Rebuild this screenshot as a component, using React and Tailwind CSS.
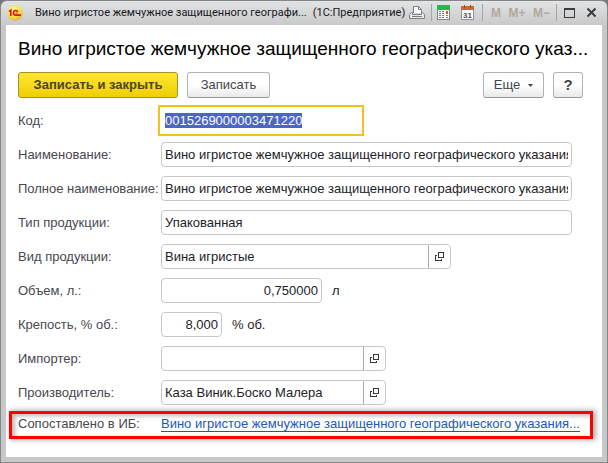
import { useEffect, useRef } from 'react';

const PRODUCT = 'Вино игристое жемчужное защищенного географического указания';

const inputBase =
  'h-[25px] rounded-[4px] border border-[#c6c7cc] bg-white px-[3px] text-[13px] leading-4 text-[#222226] outline-none';

function Row({ label, id, children }) {
  return (
    <div className="flex items-center">
      <label htmlFor={id} className="w-[143px] shrink-0 whitespace-nowrap">
        {label}
      </label>
      {children}
    </div>
  );
}

function PickerInput({ id, value, label, className }) {
  return (
    <div className={`flex h-[25px] rounded-[4px] border border-[#c6c7cc] bg-white ${className}`}>
      <input
        id={id}
        defaultValue={value}
        className="min-w-0 flex-1 bg-transparent px-[3px] text-[13px] leading-4 text-[#222226] outline-none"
      />
      <button type="button" aria-label={label} className="flex w-[22px] items-center justify-center border-l border-[#a9a9ad]">
        <svg width="10" height="9" viewBox="0 0 10 9" fill="none" stroke="#36363c" className="shrink-0" shapeRendering="crispEdges">
          <path d="M3.5 0.5h5v5h-5z" />
          <path d="M2 3.5h-1.5v5h6v-2" />
        </svg>
      </button>
    </div>
  );
}

function Logo() {
  return (
    <svg width="16" height="16" viewBox="0 0 16 16" className="shrink-0">
      <defs>
        <radialGradient id="logo" cx="0.4" cy="0.3" r="0.75">
          <stop offset="0" stopColor="#fff59a" />
          <stop offset="0.6" stopColor="#fbe04a" />
          <stop offset="1" stopColor="#dcae2c" />
        </radialGradient>
      </defs>
      <circle cx="8" cy="8" r="7.8" fill="url(#logo)" />
      <g fill="none" stroke="#e3111b" strokeWidth="1.6">
        <path d="M2 6.6L3.8 5.2V11" />
        <path d="M10.8 6.9A2.3 2.3 0 1 0 8.6 10.1H14" />
      </g>
      <path d="M8.4 8.1h2.2" stroke="#e3111b" />
    </svg>
  );
}

function PrinterIcon() {
  return (
    <svg width="16" height="16" viewBox="0 0 16 16" fill="none" stroke="#7a7f88">
      <path d="M4.5 8V1.5h5l3 3V8" fill="#fff" />
      <path d="M9.5 1.5v3h3" />
      <path d="M0.5 9.5l2-2h1v2h9v-2h1l2 2v4h-15z" fill="#e6e8ec" />
      <path d="M3 11.5h10" />
    </svg>
  );
}

function CalculatorIcon() {
  return (
    <svg width="14" height="16" viewBox="0 0 14 16" shapeRendering="crispEdges">
      <path d="M0.5 0.5h12v14h-12z" fill="#f4f6f4" stroke="#7c8a80" />
      <path d="M0 0h13v5H0z" fill="#35b04a" />
      <path d="M2 6h2v1H2zM5 6h2v1H5zM2 8h2v1H2zM5 8h2v1H5zM2 10h2v1H2zM5 10h2v1H5zM2 12h2v1H2zM5 12h2v1H5zM9 10h2v1H9zM9 12h2v1H9z" fill="#77847b" />
      <path d="M9 6h2v3H9z" fill="#d8583a" />
    </svg>
  );
}

function CalendarIcon() {
  return (
    <svg width="14" height="16" viewBox="0 0 14 16">
      <path d="M0.5 2.5h12v12h-12z" fill="#fff" stroke="#8c8f98" />
      <path d="M0 1h13v4H0z" fill="#c9683c" />
      <path d="M3.5 0v3M9.5 0v3" stroke="#8a4a2c" />
      <text x="6.5" y="12.5" textAnchor="middle" fontFamily="Liberation Sans, sans-serif" fontSize="8" fontWeight="700" fill="#4b5060">
        31
      </text>
    </svg>
  );
}

function Separator() {
  return <span className="h-[17px] w-px bg-[#a6a6aa]" />;
}

function TitleBar() {
  return (
    <header className="flex h-[25px] items-center pr-[6px] pl-[2px]">
      <Logo />
      <div className="ml-3 flex min-w-0 flex-1 gap-[6px] overflow-hidden font-[Roboto,sans-serif] text-[11px] whitespace-nowrap text-[#18181c]">
        <span>Вино игристое жемчужное защищенного географи...</span>
        <span>(1С:Предприятие)</span>
      </div>
      <div className="flex shrink-0 items-center">
        <button type="button" aria-label="Печать"><PrinterIcon /></button>
        <span className="mr-[5px] ml-[6px] flex"><Separator /></span>
        <button type="button" aria-label="Калькулятор"><CalculatorIcon /></button>
        <button type="button" aria-label="Календарь" className="ml-[10px]"><CalendarIcon /></button>
        <span className="mr-2 ml-[7px] flex"><Separator /></span>
        <div className="flex w-[59px] justify-between text-[12px] leading-4 font-bold text-[#b3a79c]">
          <button type="button">M</button>
          <button type="button">M+</button>
          <button type="button">M−</button>
        </div>
        <span className="mr-[7px] ml-[6px] flex"><Separator /></span>
        <button type="button" aria-label="Развернуть">
          <svg width="12" height="12" viewBox="0 0 12 12" fill="none" stroke="#3c3c40" shapeRendering="crispEdges">
            <path d="M0.5 1.5h10v9h-10z" />
            <path d="M0 2h11" strokeWidth="2" />
          </svg>
        </button>
        <button type="button" aria-label="Закрыть" className="ml-[10px]">
          <svg width="11" height="11" viewBox="0 0 11 11" fill="none" stroke="#3c3c40" strokeWidth="2">
            <path d="M1.5 1.5l8 8M9.5 1.5l-8 8" />
          </svg>
        </button>
      </div>
    </header>
  );
}

const plainButton =
  'h-[26px] rounded-[3px] border border-[#b4b4b6] border-b-[#98989a] bg-gradient-to-b from-white from-50% to-[#e9e9e9] text-[#444448]';

export default function App() {
  const codeRef = useRef(null);

  useEffect(() => {
    codeRef.current?.focus();
    codeRef.current?.select();
  }, []);

  return (
    <div className="min-h-screen bg-[#77797a] font-['Liberation_Sans',Arial,sans-serif] text-[13px] leading-4 text-[#48484e]">
      <div className="flex min-h-screen flex-col rounded-t-[7px] border border-[#85888a] bg-gradient-to-b from-[#e2e3e4] to-[#c6c8ca] to-[25px] px-[5px] pb-[5px]">
        <div className="-mx-[1px] -mt-px">
          <TitleBar />
        </div>
        <main className="flex-1 bg-white pt-[12px] pr-[9px] pl-[3px]">
          <h1 className="truncate pl-[9px] text-[19px] leading-6 text-black">
            Вино игристое жемчужное защищенного географического указ...
          </h1>

          <form className="pt-[11px]" onSubmit={(e) => e.preventDefault()}>
            <div className="flex items-center gap-[9px] pr-[10px] pl-[9px]">
              <button
                type="submit"
                className="h-[26px] w-[160px] rounded-[3px] border border-[#a8912a] bg-gradient-to-b from-[#fbe72c] to-[#efcf00] text-[13px] font-bold text-[#4f4526]"
              >
                Записать и закрыть
              </button>
              <button type="button" className={`${plainButton} w-[83px]`}>Записать</button>
              <button type="button" className={`${plainButton} ml-auto flex w-[61px] items-center justify-center gap-2`}>
                Еще
                <svg width="5" height="3" viewBox="0 0 5 3" fill="#444448"><path d="M0 0h5L2.5 3z" /></svg>
              </button>
              <button type="button" className={`${plainButton} w-[30px] text-[15px] font-bold`}>?</button>
            </div>

            <div className="flex flex-col gap-[9px] pt-[10px] pr-[21px] pl-[9px]">
              <Row label="Код:" id="code">
                <input
                  id="code"
                  ref={codeRef}
                  defaultValue="0015269000003471220"
                  className="h-[25px] w-[200px] bg-white px-1 text-[13px] leading-4 text-[#222226] outline-2 outline-offset-1 outline-[#f5c21c] selection:bg-[#4c66c6] selection:text-white"
                />
              </Row>
              <Row label="Наименование:" id="name">
                <input id="name" defaultValue={PRODUCT} className={`${inputBase} min-w-0 flex-1`} />
              </Row>
              <Row label="Полное наименование:" id="full-name">
                <input id="full-name" defaultValue={PRODUCT} className={`${inputBase} min-w-0 flex-1`} />
              </Row>
              <Row label="Тип продукции:" id="type">
                <input id="type" defaultValue="Упакованная" className={`${inputBase} min-w-0 flex-1`} />
              </Row>
              <Row label="Вид продукции:" id="kind">
                <PickerInput id="kind" value="Вина игристые" label="Открыть вид продукции" className="w-[290px]" />
              </Row>
              <Row label="Объем, л.:" id="volume">
                <input id="volume" defaultValue="0,750000" className={`${inputBase} w-[161px] text-right`} />
                <span className="ml-[10px] text-[#222226]">л</span>
              </Row>
              <Row label="Крепость, % об.:" id="strength">
                <input id="strength" defaultValue="8,000" className={`${inputBase} w-[61px] text-right`} />
                <span className="ml-[10px] text-[#222226]">% об.</span>
              </Row>
              <Row label="Импортер:" id="importer">
                <PickerInput id="importer" value="" label="Открыть импортера" className="w-[225px]" />
              </Row>
              <Row label="Производитель:" id="producer">
                <PickerInput id="producer" value="Каза Виник.Боско Малера" label="Открыть производителя" className="w-[225px]" />
              </Row>
            </div>

            <div className="mt-[6px] flex h-[28px] items-center border-3 border-[#fe0000] px-[6px] pb-[2px] shadow-[2px_0_5px_1px_#b0b0b0,inset_3px_2px_4px_#b8b8b8]">
              <span className="w-[143px] shrink-0">Сопоставлено в ИБ:</span>
              <a href="#product" className="border-b border-[#2257b8] leading-[15px] whitespace-nowrap text-[#2257b8]">
                Вино игристое жемчужное защищенного географического указания...
              </a>
            </div>
          </form>
        </main>
      </div>
    </div>
  );
}
